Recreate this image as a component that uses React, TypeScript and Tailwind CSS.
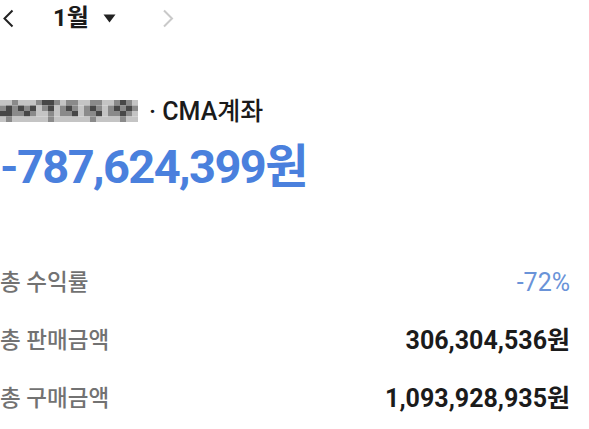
import React from "react";

const L = "#c4c4c4";
const M = "#8a8a8a";
const D = "#474747";
const mosaic: string[][] = [
  [L, L, M, L, L, L, M, D, D, M, L, M, M, L, L, M, M, L, L, M, D, M, L],
  [M, D, M, D, M, D, L, M, D, L, M, D, M, L, M, D, M, L, M, D, M, D, M],
  [D, D, M, M, D, M, L, L, M, L, M, M, D, L, M, M, D, L, M, M, D, M, L],
  [L, M, L, L, L, L, L, L, M, L, L, L, L, L, L, M, L, L, L, L, M, L, L],
];

function Mosaic() {
  return (
    <svg width="138" height="22" viewBox="0 0 138 22" className="shrink-0">
      {mosaic.map((row, r) =>
        row.map((c, i) => (
          <rect key={`${r}-${i}`} x={i * 6} y={r * 5.5} width="6" height="5.5" fill={c} />
        ))
      )}
    </svg>
  );
}

export default function App() {
  const font = { fontFamily: 'Roboto, "Noto Sans CJK KR", sans-serif' };
  return (
    <div className="w-[589px] h-[429px] bg-white overflow-hidden" style={font}>
      {/* header */}
      <div className="h-[36px] flex items-center">
        <svg width="12" height="19" viewBox="0 0 12 19" className="ml-[2px]">
          <polyline points="10.5,1.5 2.5,9.5 10.5,17.5" fill="none" stroke="#222" strokeWidth="2" />
        </svg>
        <span className="ml-[39px] text-[24px] font-bold text-[#1b1b1b] leading-none">1월</span>
        <svg width="13" height="9" viewBox="0 0 13 9" className="ml-[14px]">
          <polygon points="0.5,0.5 12.5,0.5 6.5,8.5" fill="#222" />
        </svg>
        <svg width="12" height="19" viewBox="0 0 12 19" className="ml-[46px]">
          <polyline points="2,1.5 10,9.5 2,17.5" fill="none" stroke="#c9c9c9" strokeWidth="2" />
        </svg>
      </div>

      {/* account name */}
      <div className="mt-[61px] h-[28px] flex items-center">
        <Mosaic />
        <span className="ml-[11px] text-[25px] font-medium text-[#1b1b1b] leading-none whitespace-nowrap">
          · CMA계좌
        </span>
      </div>

      {/* amount */}
      <div className="mt-[13px] h-[56px] flex items-center">
        <span className="text-[47px] font-bold text-[#4a80dd] leading-none tracking-[-1.6px] whitespace-nowrap">
          -787,624,399원
        </span>
      </div>

      {/* rows */}
      <div className="mt-[59px] pr-[19px]">
        <div className="h-[58px] flex items-center justify-between">
          <span className="text-[22.5px] font-medium text-[#727272] leading-none">총 수익률</span>
          <span className="text-[25px] text-[#6a93d8] leading-none">-72%</span>
        </div>
        <div className="h-[58px] flex items-center justify-between">
          <span className="text-[22.5px] font-medium text-[#727272] leading-none">총 판매금액</span>
          <span className="text-[25px] font-bold text-[#1b1b1b] leading-none">306,304,536원</span>
        </div>
        <div className="h-[58px] flex items-center justify-between">
          <span className="text-[22.5px] font-medium text-[#727272] leading-none">총 구매금액</span>
          <span className="text-[25px] font-bold text-[#1b1b1b] leading-none">1,093,928,935원</span>
        </div>
      </div>
    </div>
  );
}
